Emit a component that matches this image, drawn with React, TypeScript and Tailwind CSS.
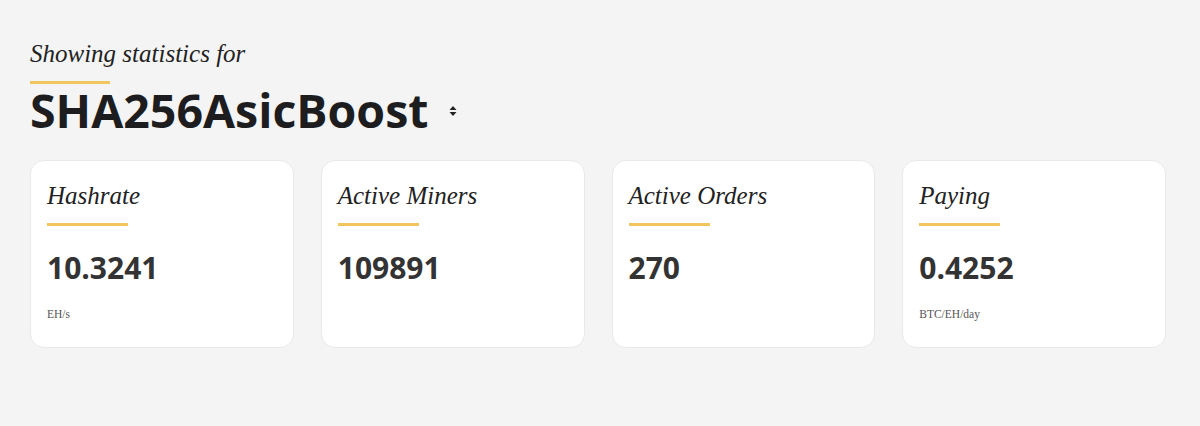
import React from 'react';

const stats = [
  { label: 'Hashrate', value: '10.3241', unit: 'EH/s' },
  { label: 'Active Miners', value: '109891', unit: '' },
  { label: 'Active Orders', value: '270', unit: '' },
  { label: 'Paying', value: '0.4252', unit: 'BTC/EH/day' },
];

function StatCard({ label, value, unit }: { label: string; value: string; unit: string }) {
  return (
    <div className="h-[188px] rounded-[14px] border border-[#e9e9e9] bg-white px-4 pt-[21px]">
      <div className="font-['Liberation_Serif',serif] text-[25px] italic leading-[28px] text-[#222]">{label}</div>
      <div className="mt-[13px] h-[3px] w-[81px] bg-[#f1c65e]" />
      <div className="mt-[24px] font-['Open_Sans',sans-serif] text-[30px] font-bold leading-[36px] text-[#333]">
        {value}
      </div>
      <div className="mt-[21px] font-['Liberation_Serif',serif] text-[11.5px] leading-[14px] text-[#555]">{unit}</div>
    </div>
  );
}

export default function App() {
  return (
    <div className="min-h-[426px] bg-[#f4f4f4] pl-[30px] pr-[34px] pt-[40px]">
      <div className="font-['Liberation_Serif',serif] text-[25px] italic leading-[28px] text-[#222]">
        Showing statistics for
      </div>
      <div className="mt-[13px] h-[3px] w-[80px] bg-[#f1c65e]" />
      <div className="mt-[-4px] flex items-center">
        <h1 className="font-['Open_Sans',sans-serif] text-[46.5px] font-bold leading-[60px] text-[#1d1d1f]">
          SHA256AsicBoost
        </h1>
        <svg width="10" height="14" viewBox="0 0 10 14" className="ml-[20px] mt-[2px]">
          <path d="M5 2 L8.5 6 H1.5 Z" fill="#222" />
          <path d="M5 12 L8.5 8 H1.5 Z" fill="#222" />
        </svg>
      </div>
      <div className="mt-[20px] grid grid-cols-4 gap-[27px]">
        {stats.map((s) => (
          <StatCard key={s.label} {...s} />
        ))}
      </div>
    </div>
  );
}
